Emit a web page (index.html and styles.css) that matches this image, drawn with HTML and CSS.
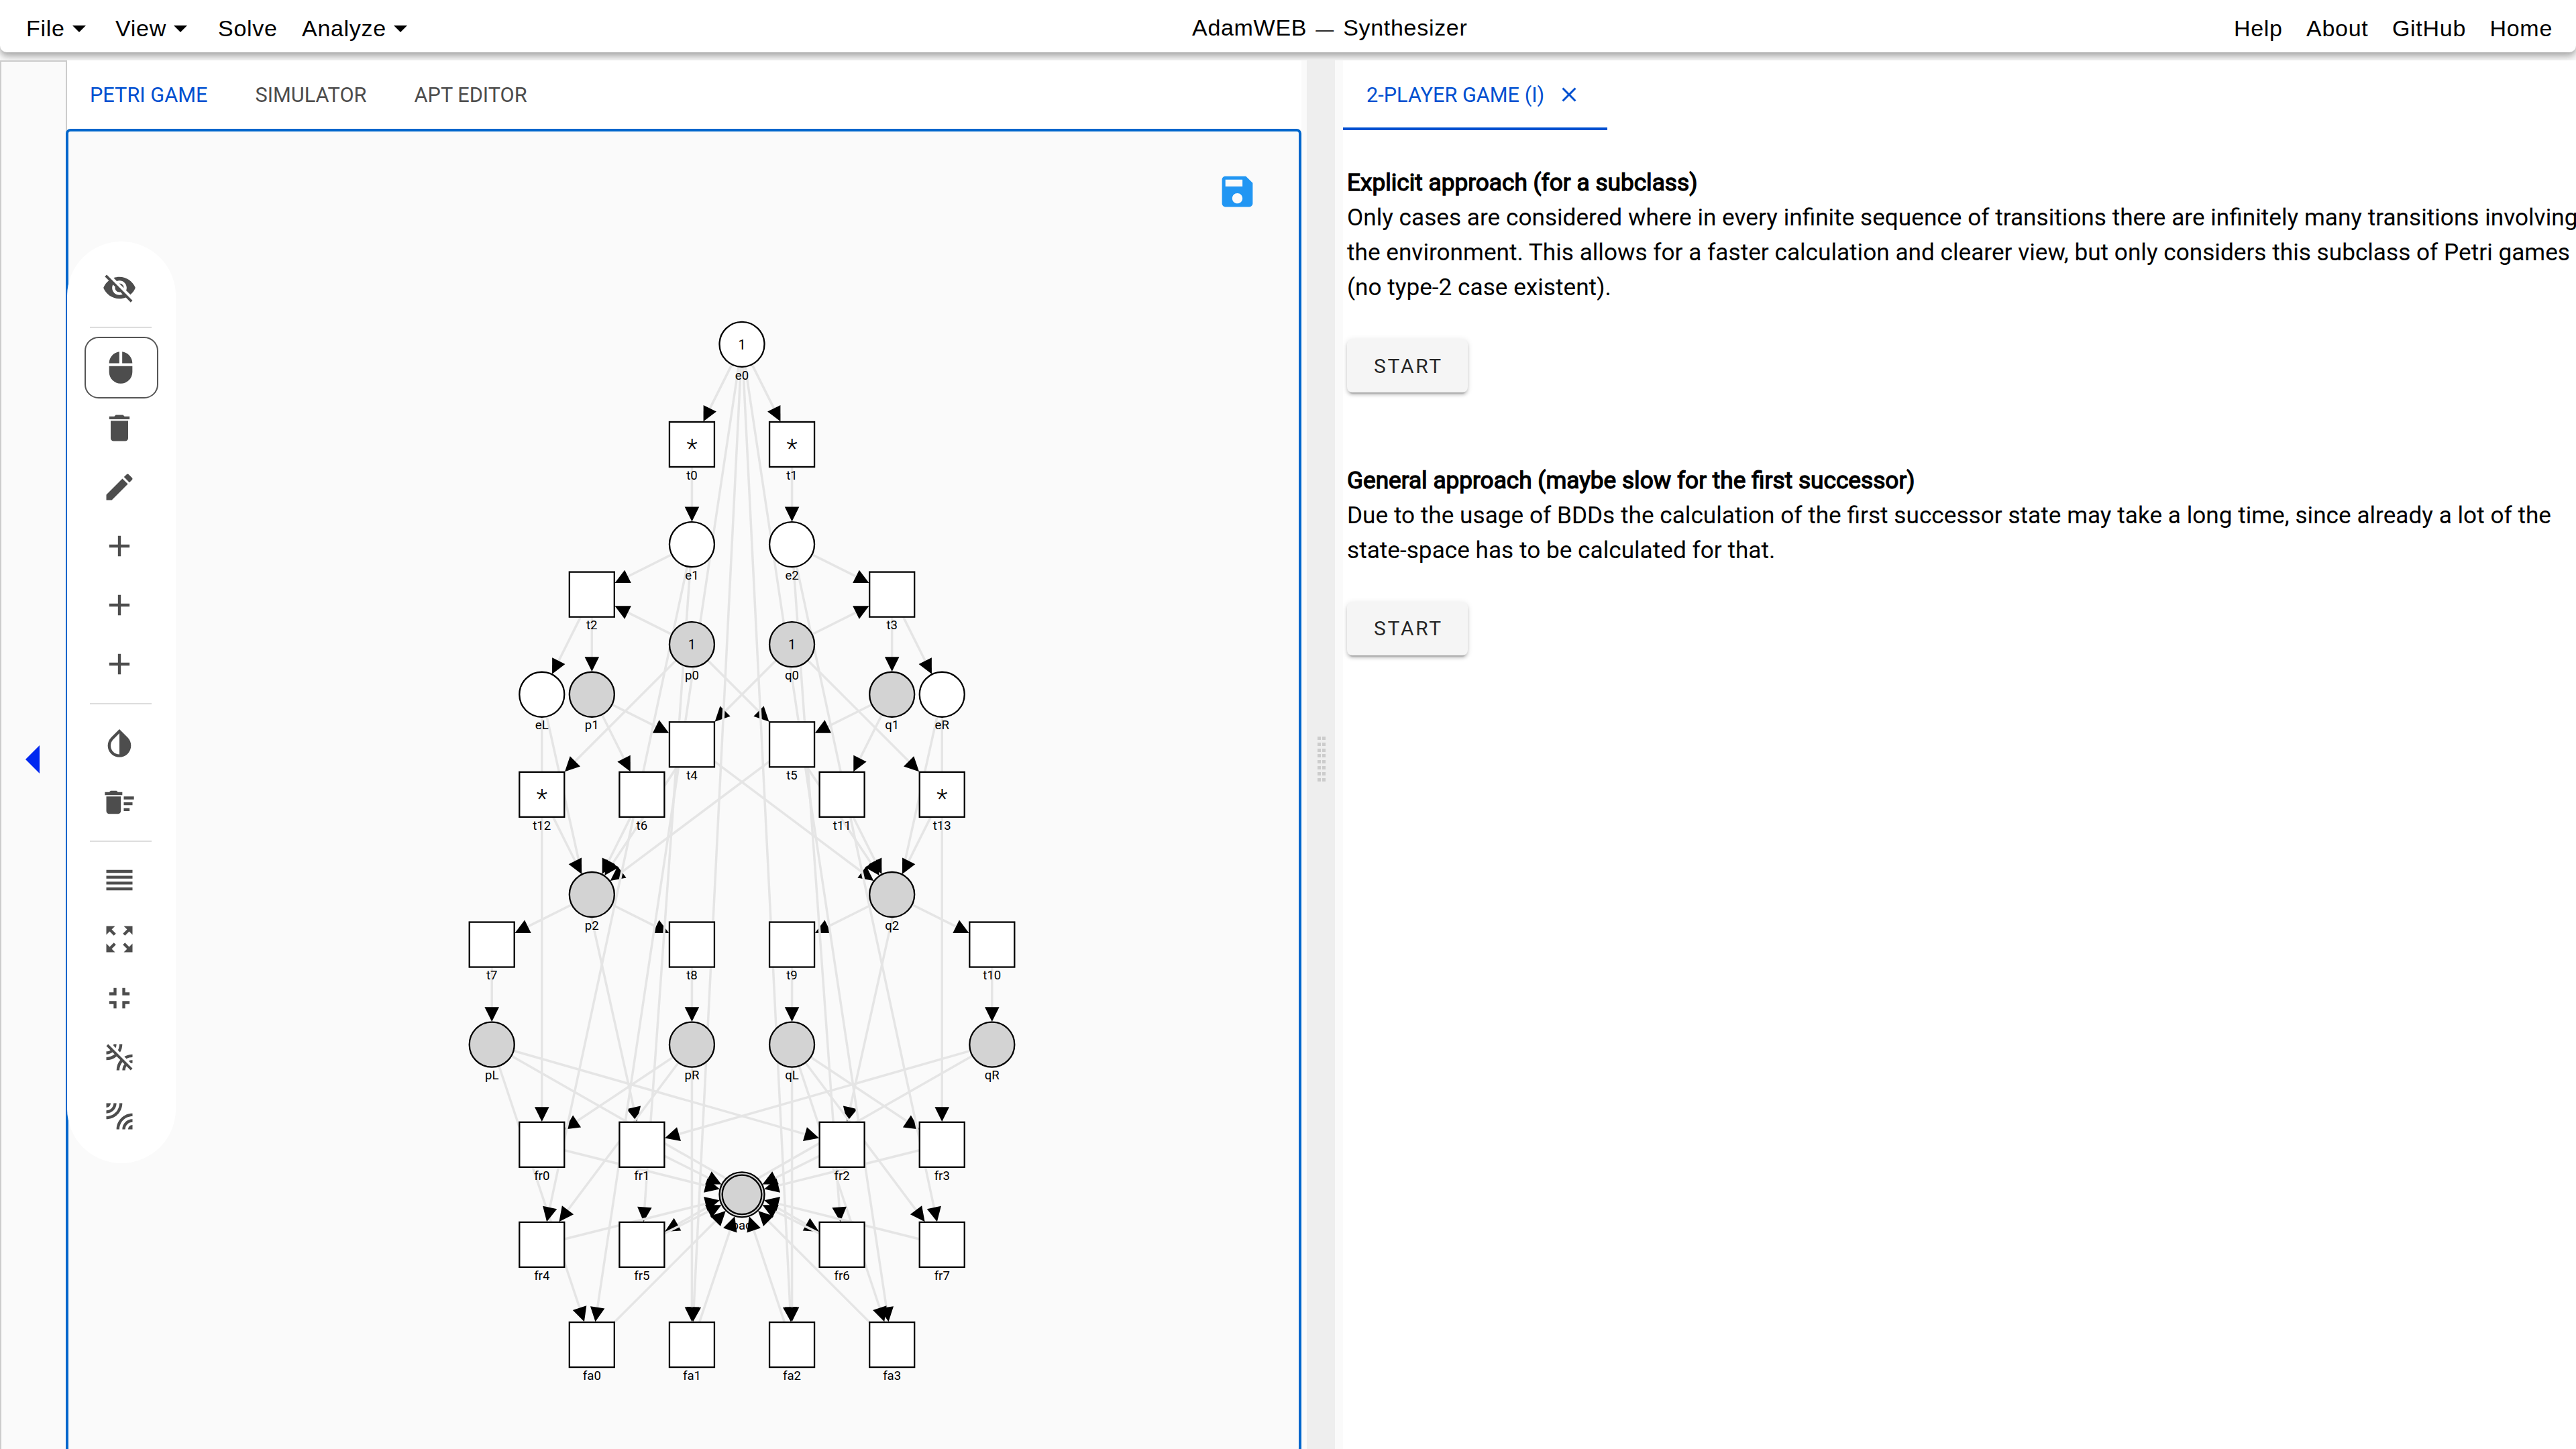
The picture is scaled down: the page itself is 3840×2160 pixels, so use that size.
FILE: index.html
```html
<!DOCTYPE html>
<html lang="en">
<head>
<meta charset="utf-8">
<title>AdamWEB — Synthesizer</title>
<link rel="stylesheet" href="styles.css">
</head>
<body>
<header class="menubar">
  <nav class="menu">
    <a class="menu-item menu-item--file">File<i class="caret"></i></a>
    <a class="menu-item menu-item--view">View<i class="caret"></i></a>
    <a class="menu-item menu-item--solve">Solve</a>
    <a class="menu-item">Analyze<i class="caret"></i></a>
  </nav>
  <div class="brand">AdamWEB <span class="dash">—</span> Synthesizer</div>
  <nav class="links"><a>Help</a><a>About</a><a>GitHub</a><a>Home</a></nav>
</header>

<main class="workspace">
  <aside class="drawer"><i class="drawer-arrow"></i></aside>

  <section class="pane-left">
    <div class="tabs">
      <a class="tab tab--active">PETRI GAME</a><a class="tab">SIMULATOR</a><a class="tab">APT EDITOR</a>
    </div>
    <div class="canvas">
      <svg class="graph" id="graph" viewBox="102 196 1834 1966"></svg>
      <svg class="icon save" viewBox="0 0 24 24"><path d="M17 3H5c-1.11 0-2 .9-2 2v14c0 1.1.89 2 2 2h14c1.1 0 2-.9 2-2V7l-4-4zm-5 16c-1.66 0-3-1.34-3-3s1.34-3 3-3 3 1.34 3 3-1.34 3-3 3zm3-10H5V5h10v4z"/></svg>
      <div class="toolbar">
        <a class="tool"><svg class="icon" viewBox="0 0 24 24"><path d="M12 7c2.76 0 5 2.24 5 5 0 .65-.13 1.26-.36 1.83l2.92 2.92c1.51-1.26 2.7-2.89 3.43-4.75-1.73-4.39-6-7.5-11-7.5-1.4 0-2.74.25-3.98.7l2.16 2.16C10.74 7.13 11.35 7 12 7zM2 4.27l2.28 2.28.46.46C3.08 8.3 1.78 10.02 1 12c1.73 4.39 6 7.5 11 7.5 1.55 0 3.03-.3 4.38-.84l.42.42L19.73 22 21 20.73 3.27 3 2 4.27zM7.53 9.8l1.55 1.55c-.05.21-.08.43-.08.65 0 1.66 1.34 3 3 3 .22 0 .44-.03.65-.08l1.55 1.55c-.67.33-1.41.53-2.2.53-2.76 0-5-2.24-5-5 0-.79.2-1.53.53-2.2zm4.31-.78l3.15 3.15.02-.16c0-1.66-1.34-3-3-3l-.17.01z"/></svg></a>
        <hr class="rule">
        <a class="tool tool--selected"><svg class="icon" viewBox="0 0 24 24"><path d="M13 1.07V9h7c0-4.08-3.05-7.44-7-7.93zM4 15c0 4.42 3.58 8 8 8s8-3.58 8-8v-4H4v4zm7-13.93C7.05 1.56 4 4.92 4 9h7V1.07z"/></svg></a>
        <a class="tool"><svg class="icon" viewBox="0 0 24 24"><path d="M6 19c0 1.1.9 2 2 2h8c1.1 0 2-.9 2-2V7H6v12zM19 4h-3.5l-1-1h-5l-1 1H5v2h14V4z"/></svg></a>
        <a class="tool"><svg class="icon" viewBox="0 0 24 24"><path d="M3 17.25V21h3.75L17.81 9.94l-3.75-3.75L3 17.25zM20.71 7.04c.39-.39.39-1.02 0-1.41l-2.34-2.34c-.39-.39-1.02-.39-1.41 0l-1.83 1.83 3.75 3.75 1.83-1.83z"/></svg></a>
        <a class="tool"><svg class="icon" viewBox="0 0 24 24"><path d="M19 13h-6v6h-2v-6H5v-2h6V5h2v6h6v2z"/></svg></a>
        <a class="tool"><svg class="icon" viewBox="0 0 24 24"><path d="M19 13h-6v6h-2v-6H5v-2h6V5h2v6h6v2z"/></svg></a>
        <a class="tool"><svg class="icon" viewBox="0 0 24 24"><path d="M19 13h-6v6h-2v-6H5v-2h6V5h2v6h6v2z"/></svg></a>
        <hr class="rule rule--wide">
        <a class="tool"><svg class="icon" viewBox="0 0 24 24"><path d="M17.66 7.93L12 2.27 6.34 7.93c-3.12 3.12-3.12 8.19 0 11.31C7.9 20.8 9.95 21.58 12 21.58c2.05 0 4.1-.78 5.66-2.34 3.12-3.12 3.12-8.19 0-11.31zM12 19.59c-1.6 0-3.11-.62-4.24-1.76C6.62 16.69 6 15.19 6 13.59s.62-3.11 1.76-4.24L12 5.1v14.49z"/></svg></a>
        <a class="tool"><svg class="icon" viewBox="0 0 24 24"><path d="M15 16h4v2h-4zm0-8h7v2h-7zm0 4h6v2h-6zM3 18c0 1.1.9 2 2 2h6c1.1 0 2-.9 2-2V8H3v10zM14 5h-3l-1-1H6L5 5H2v2h12z"/></svg></a>
        <hr class="rule rule--tight">
        <a class="tool"><svg class="icon" viewBox="0 0 24 24"><path d="M3 15h18v-2H3v2zm0 4h18v-2H3v2zm0-8h18V9H3v2zm0-6v2h18V5H3z"/></svg></a>
        <a class="tool"><svg class="icon" viewBox="0 0 24 24"><path d="M15 3l2.3 2.3-2.89 2.87 1.42 1.42L18.7 6.7 21 9V3zM3 9l2.3-2.3 2.87 2.89 1.42-1.42L6.7 5.3 9 3H3zm6 12l-2.3-2.3 2.89-2.87-1.42-1.42L5.3 17.3 3 15v6zm12-6l-2.3 2.3-2.87-2.89-1.42 1.42 2.89 2.87L15 21h6z"/></svg></a>
        <a class="tool"><svg class="icon" viewBox="0 0 24 24"><path d="M5 16h3v3h2v-5H5v2zm3-8H5v2h5V5H8v3zm6 11h2v-3h3v-2h-5v5zm2-11V5h-2v5h5V8h-3z"/></svg></a>
        <a class="tool"><svg class="icon" viewBox="0 0 24 24"><path d="M10 3H8c0 .37-.04.72-.12 1.06l1.59 1.59C9.81 4.84 10 3.94 10 3zM3 4.27l2.84 2.84C5.03 7.67 4.06 8 3 8v2c1.61 0 3.09-.55 4.27-1.46L8.7 9.97C7.14 11.24 5.16 12 3 12v2c2.71 0 5.19-.99 7.11-2.62l2.5 2.5C10.99 15.81 10 18.29 10 21h2c0-2.16.76-4.14 2.03-5.69l1.43 1.43C14.55 17.91 14 19.39 14 21h2c0-1.06.33-2.03.89-2.84L19.73 21 21 19.73 4.27 3 3 4.27zM14 3h-2c0 1.5-.37 2.91-1.02 4.16l1.46 1.46C13.42 6.98 14 5.06 14 3zm5.94 13.12c.34-.08.69-.12 1.06-.12v-2c-.94 0-1.84.19-2.66.52l1.6 1.6zm-4.56-4.56l1.46 1.46C18.09 12.37 19.5 12 21 12v-2c-2.06 0-3.98.58-5.62 1.56z"/></svg></a>
        <a class="tool"><svg class="icon" viewBox="0 0 24 24"><path d="M6 3H3v3c1.66 0 3-1.34 3-3zm8 0h-2c0 4.97-4.03 9-9 9v2c6.08 0 11-4.93 11-11zm-4 0H8c0 2.76-2.24 5-5 5v2c3.87 0 7-3.13 7-7zm0 18h2c0-4.97 4.03-9 9-9v-2c-6.07 0-11 4.93-11 11zm8 0h3v-3c-1.66 0-3 1.34-3 3zm-4 0h2c0-2.76 2.24-5 5-5v-2c-3.87 0-7 3.13-7 7z"/></svg></a>
      </div>
    </div>
  </section>

  <div class="gutter"><i class="grip"></i></div>

  <section class="pane-right">
    <div class="tabs">
      <a class="tab tab--active tab--underlined">2-PLAYER GAME (I)<svg class="icon tab-close" viewBox="0 0 24 24"><path d="M19 6.41L17.59 5 12 10.59 6.41 5 5 6.41 10.59 12 5 17.59 6.41 19 12 13.41 17.59 19 19 17.59 13.41 12z"/></svg></a>
    </div>
    <div class="approaches">
      <article class="approach">
        <h2 class="approach-title">Explicit approach (for a subclass)</h2>
        <p class="approach-text">Only cases are considered where in every infinite sequence of transitions there are infinitely many transitions involving<br>the environment. This allows for a faster calculation and clearer view, but only considers this subclass of Petri games<br>(no type-2 case existent).</p>
        <button class="start">START</button>
      </article>
      <article class="approach">
        <h2 class="approach-title">General approach (maybe slow for the first successor)</h2>
        <p class="approach-text">Due to the usage of BDDs the calculation of the first successor state may take a long time, since already a lot of the<br>state-space has to be calculated for that.</p>
        <button class="start">START</button>
      </article>
    </div>
  </section>
</main>
<script src="graph.js"></script>
</body>
</html>
```
FILE: styles.css
```css
* { box-sizing: border-box; }

body {
  margin: 0;
  width: 3840px;
  height: 2160px;
  overflow: hidden;
  display: flex;
  flex-direction: column;
  background: #fafafa;
  font-family: Roboto, sans-serif;
  color: #000;
}

.icon { display: block; fill: currentColor; }

/* Menu bar */
.menubar {
  position: relative;
  z-index: 0;
  flex: none;
  height: 78px;
  padding: 0 35px 2px 39px;
  display: flex;
  align-items: center;
  background: #fff;
  border-radius: 0 0 10px 10px;
  box-shadow: 0 4px 8px -2px rgba(0,0,0,.2), 0 8px 10px rgba(0,0,0,.14), 0 2px 20px rgba(0,0,0,.12);
  font: 34px/44px "Liberation Sans", Arial, sans-serif;
  letter-spacing: .7px;
}
.menu { display: flex; width: 1738px; padding-top: 8px; }
.menu-item { display: flex; align-items: center; }
.menu-item--file { width: 133px; }
.menu-item--view { width: 153px; }
.menu-item--solve { width: 125px; }
.caret {
  margin: 1px 0 0 11px;
  border: 10px solid transparent;
  border-top-color: #000;
  border-bottom-width: 0;
}
.brand { padding-top: 8px; }
.dash { font-size: 27px; margin: 0 3px; }
.links { margin-left: auto; padding-top: 8px; display: flex; gap: 35.5px; }

/* Workspace */
.workspace {
  position: relative;
  z-index: 1;
  flex: 1;
  min-height: 0;
  margin-top: 12px;
  display: flex;
}
.drawer {
  width: 100px;
  border: 2px solid #ccc;
  border-bottom: 0;
  background: #fafafa;
  display: flex;
  align-items: center;
  justify-content: center;
}
.drawer-arrow {
  margin: 12px 3px 0 0;
  border: 21px solid transparent;
  border-right-color: #0028f0;
  border-left-width: 0;
}
.pane-left {
  width: 1842px;
  margin-left: -2px;
  display: flex;
  flex-direction: column;
}
.tabs {
  flex: none;
  height: 104px;
  display: flex;
  background: #fff;
}
.pane-left .tabs { height: 102px; margin-left: 2px; }
.tab {
  height: 104px;
  padding: 0 37px 2px 34px;
  display: flex;
  align-items: center;
  font-size: 30.7px;
  color: #4d4d4d;
}
.tab--active { color: #0050d0; }
.tab--underlined { width: 394px; padding: 2px 0 0 35px; border-bottom: 4px solid #0050d0; }
.tab-close { width: 36px; height: 36px; margin-left: 19px; }

.canvas {
  position: relative;
  height: 1990px;
  border: 4px solid #06c;
  border-radius: 7px;
  background: #fafafa;
}
.graph { display: block; width: 1834px; height: 1966px; }
.save {
  position: absolute;
  top: 59px;
  right: 61px;
  width: 61px;
  height: 61px;
  color: #2196f3;
}

/* Floating tool palette over the canvas */
.toolbar {
  position: absolute;
  left: -2px;
  top: 164px;
  width: 162px;
  height: 1374px;
  padding-top: 25px;
  border-radius: 81px;
  background: #fff;
  color: #4d4d4d;
}
.tool {
  width: 110px;
  height: 88px;
  margin-left: 26px;
  display: flex;
  align-items: center;
  justify-content: center;
}
.tool .icon { width: 52px; height: 52px; margin-right: 6px; }
.tool--selected {
  height: 92px;
  border: 2px solid #555;
  border-radius: 21px;
}
.tool--selected .icon { margin-right: 2px; }
.rule {
  width: 92px;
  height: 2px;
  margin: 14px 0 13px 34px;
  border: 0;
  background: #ddd;
}
.rule--wide { margin-bottom: 14px; }
.rule--tight { margin-top: 13px; }

/* Split handle */
.gutter {
  width: 62px;
  border: solid #fafafa;
  border-width: 0 12px 0 8px;
  background: #eee;
  display: flex;
  align-items: center;
  justify-content: center;
}
.grip {
  width: 12px;
  height: 67px;
  margin: 12px 0 0 2px;
  background:
    linear-gradient(90deg, transparent 5px, #eee 5px 7px, transparent 7px),
    repeating-linear-gradient(#ccc 0 5px, #eee 5px 8.83px);
}

/* Results pane */
.pane-right {
  flex: 1;
  min-width: 0;
  overflow: hidden;
  background: #fff;
}
.approaches { padding: 52px 0 0 6px; }
.approach { height: 443.5px; }
.approach-title, .approach-text {
  margin: 0;
  font-size: 35.2px;
  font-weight: 400;
  line-height: 52px;
  white-space: nowrap;
}
.approach-title { -webkit-text-stroke: 1.3px #000; }
.start {
  display: block;
  width: 180px;
  height: 80px;
  margin-top: 51px;
  padding: 0 0 0 3px;
  border: 0;
  border-radius: 8px;
  background: #f5f5f5;
  box-shadow: 0 6px 2px -4px rgba(0,0,0,.2), 0 4px 4px rgba(0,0,0,.14), 0 2px 10px rgba(0,0,0,.12);
  font: 30px Roboto, sans-serif;
  letter-spacing: 2.7px;
  color: rgba(0,0,0,.87);
}

/* Petri net */
.edge { stroke: #e5e5e5; stroke-width: 3.5; }
.node { fill: #fff; stroke: #000; stroke-width: 2.3; }
.node--system { fill: #d3d3d3; }
.label, .token, .star { text-anchor: middle; fill: #000; font-family: Roboto, sans-serif; }
.label { font-size: 18.6px; }
.token { font-size: 20px; }
.star { font-size: 38px; font-weight: 300; }
```
FILE: graph.js
```js
// Grid placement of the net: one unit is the distance between two layers.
const ORIGIN = { x: 1106, y: 513.35 }, UNIT = 149.12, HALF = 34.2;

// name: [column, row, kind, marking]
const nodes = {
  e0: [0, 0, 'env', '1'],
  t0: [-.5, 1, 'tr', '*'], t1: [.5, 1, 'tr', '*'],
  e1: [-.5, 2, 'env'], e2: [.5, 2, 'env'],
  t2: [-1.5, 2.5, 'tr'], t3: [1.5, 2.5, 'tr'],
  p0: [-.5, 3, 'sys', '1'], q0: [.5, 3, 'sys', '1'],
  eL: [-2, 3.5, 'env'], p1: [-1.5, 3.5, 'sys'], q1: [1.5, 3.5, 'sys'], eR: [2, 3.5, 'env'],
  t4: [-.5, 4, 'tr'], t5: [.5, 4, 'tr'],
  t12: [-2, 4.5, 'tr', '*'], t6: [-1, 4.5, 'tr'], t11: [1, 4.5, 'tr'], t13: [2, 4.5, 'tr', '*'],
  p2: [-1.5, 5.5, 'sys'], q2: [1.5, 5.5, 'sys'],
  t7: [-2.5, 6, 'tr'], t8: [-.5, 6, 'tr'], t9: [.5, 6, 'tr'], t10: [2.5, 6, 'tr'],
  pL: [-2.5, 7, 'sys'], pR: [-.5, 7, 'sys'], qL: [.5, 7, 'sys'], qR: [2.5, 7, 'sys'],
  fr0: [-2, 8, 'tr'], fr1: [-1, 8, 'tr'], fr2: [1, 8, 'tr'], fr3: [2, 8, 'tr'],
  bad: [0, 8.5, 'bad'],
  fr4: [-2, 9, 'tr'], fr5: [-1, 9, 'tr'], fr6: [1, 9, 'tr'], fr7: [2, 9, 'tr'],
  fa0: [-1.5, 10, 'tr'], fa1: [-.5, 10, 'tr'], fa2: [.5, 10, 'tr'], fa3: [1.5, 10, 'tr']
};

// Later arcs are painted over earlier ones.
const arcs = `
  e0-t0 e0-t1 t0-e1 t1-e2 e1-t2 p0-t2 e2-t3 q0-t3 t2-eL t2-p1 t3-q1 t3-eR
  p1-t4 q0-t4 q1-t5 p0-t5 p1-t6 q1-t11 p0-t12 q0-t13 eL-fr1 eR-fr2
  t4-p2 t4-q2 t5-p2 t5-q2 t6-p2 t12-p2 t11-q2 t13-q2
  p2-t7 p2-t8 q2-t9 q2-t10 t7-pL t8-pR t9-qL t10-qR
  eL-fr0 pR-fr0 qR-fr1 pL-fr2 eR-fr3 qL-fr3
  e0-fa0 pL-fa0 e0-fa1 pR-fa1 e0-fa2 qL-fa2 e0-fa3 qL-fa3
  e1-fr4 pR-fr4 e1-fr5 qR-fr5 e2-fr6 pL-fr6 e2-fr7 qL-fr7
  fr0-bad fr1-bad fr2-bad fr3-bad fr4-bad fr5-bad fr6-bad fr7-bad
  fa0-bad fa1-bad fa2-bad fa3-bad`.trim().split(/\s+/);

const pos = name => ({
  x: ORIGIN.x + nodes[name][0] * UNIT,
  y: ORIGIN.y + nodes[name][1] * UNIT
});
const n = v => v.toFixed(2);
let out = '';

for (const arc of arcs) {
  const [from, to] = arc.split('-'), a = pos(from), b = pos(to);
  const dx = b.x - a.x, dy = b.y - a.y, len = Math.hypot(dx, dy), ux = dx / len, uy = dy / len;
  const reach = nodes[to][2] === 'tr' ? HALF / Math.max(Math.abs(ux), Math.abs(uy)) : HALF;
  const tx = b.x - ux * reach, ty = b.y - uy * reach;
  const bx = tx - ux * 21.8, by = ty - uy * 21.8, w = 10.8;
  out += `<line class="edge" x1="${n(a.x)}" y1="${n(a.y)}" x2="${n(tx - ux * 8)}" y2="${n(ty - uy * 8)}"/>` +
    `<polygon points="${n(tx)},${n(ty)} ${n(bx - uy * w)},${n(by + ux * w)} ${n(bx + uy * w)},${n(by - ux * w)}"/>`;
}

for (const [name, [, , kind, mark]] of Object.entries(nodes)) {
  const { x, y } = pos(name);
  if (kind === 'tr') {
    out += `<rect class="node" x="${n(x - 33.5)}" y="${n(y - 33.5)}" width="67" height="67"/>`;
  } else {
    out += `<circle class="node${kind === 'env' ? '' : ' node--system'}" cx="${n(x)}" cy="${n(y)}" r="33.5"/>`;
    if (kind === 'bad') out += `<circle class="node node--system" cx="${n(x)}" cy="${n(y)}" r="29.3"/>`;
  }
  if (mark === '1') out += `<text class="token" x="${n(x)}" y="${n(y + 7.3)}">1</text>`;
  if (mark === '*') out += `<text class="star" x="${n(x)}" y="${n(y + 20)}">*</text>`;
  out += `<text class="label" x="${n(x)}" y="${n(y + 52.2)}">${name}</text>`;
}
document.getElementById('graph').innerHTML = out;
```
